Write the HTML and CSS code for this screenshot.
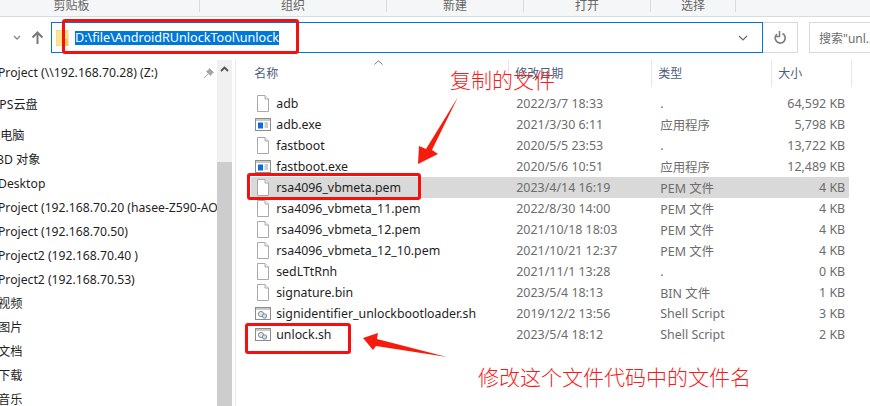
FILE: index.html
```html
<!DOCTYPE html>
<html lang="zh-CN">

<head>
    <meta charset="UTF-8">
    <meta name="viewport" content="width=device-width, initial-scale=1.0">
    <title>unlock</title>
    <link rel="stylesheet" href="styles.css">
</head>

<body>

    <svg class="defs" width="0" height="0">
        <symbol id="icon-file" viewBox="0 0 14 17">
            <path d="M1.5 .5H9L12.5 4V16.5H1.5Z" fill="#fff" stroke="#a9a9a9" />
            <path d="M9 .5V4H12.5" fill="#f2f2f2" stroke="#a9a9a9" />
        </symbol>
        <symbol id="icon-exe" viewBox="0 0 16 13">
            <rect x=".5" y=".5" width="15" height="12" fill="#fff" stroke="#8c8c8c" />
            <rect x="1" y="1" width="14" height="2" fill="#c9c9c9" />
            <rect x="3" y="4.5" width="5" height="6" fill="#0a6fd0" />
            <path d="M9.5 5H13M9.5 7H13M9.5 9H13" stroke="#9a9a9a" />
        </symbol>
        <symbol id="icon-script" viewBox="0 0 16 13">
            <rect x=".5" y=".5" width="15" height="12" fill="#fff" stroke="#8c8c8c" />
            <rect x="1" y="1" width="14" height="2" fill="#c9c9c9" />
            <circle cx="6" cy="7" r="2.6" fill="#dfe9ef" stroke="#7d8d99" />
            <circle cx="9.5" cy="9" r="2.2" fill="#cfe0ea" stroke="#7d8d99" />
        </symbol>
    </svg>

    <div class="window">
        <!-- Ribbon group labels -->
        <div class="ribbon">
            <div class="ribbon-group group-clipboard">剪贴板</div>
            <div class="ribbon-group group-organize">组织</div>
            <div class="ribbon-group group-new">新建</div>
            <div class="ribbon-group group-open">打开</div>
            <div class="ribbon-group group-select">选择</div>
        </div>

        <!-- Address row -->
        <div class="address-row">
            <div class="nav-buttons">
                <svg class="icon-down" width="8" height="5" viewBox="0 0 8 5">
                    <path d="M1 1L4 4L7 1" fill="none" stroke="#8a8a8a" stroke-width="1.4" />
                </svg>
                <svg class="icon-up" width="13" height="13" viewBox="0 0 13 13">
                    <path d="M6.5 13V2M1.5 6.5L6.5 1.5L11.5 6.5" fill="none" stroke="#7a7a7a" stroke-width="2" />
                </svg>
            </div>
            <div class="address-bar">
                <svg class="icon-folder" width="13" height="16" viewBox="0 0 13 16">
                    <rect x="0" y="0" width="12" height="16" fill="#fde58f" />
                    <rect x="0" y="0" width="12" height="16" fill="none" stroke="#f0d27a" />
                    <rect x="9" y="9" width="3" height="7" fill="#f3c95c" />
                </svg>
                <span class="address-text">D:\file\AndroidRUnlockTool\unlock</span>
                <svg class="icon-drop" width="10" height="6" viewBox="0 0 10 6">
                    <path d="M1 1L5 5L9 1" fill="none" stroke="#666" stroke-width="1.1" />
                </svg>
            </div>
            <div class="refresh">
                <svg width="14" height="14" viewBox="0 0 14 14">
                    <path d="M4 3.2A5 5 0 1 0 9.5 2.6" fill="none" stroke="#7d7d7d" stroke-width="1.7" />
                    <path d="M5.500 0V5.500H1" fill="none" stroke="#7d7d7d" stroke-width="1.5" transform="translate(1 0)" />
                </svg>
            </div>
            <div class="search">搜索"unl...</div>
        </div>

        <div class="content">
            <!-- Navigation tree -->
            <div class="nav-pane">
                <div class="nav-item nav-first">Project (\\192.168.70.28) (Z:)
                    <svg class="icon-pin" width="11" height="11" viewBox="0 0 11 11">
                        <path d="M6.500 .5L10.500 4.500L9 5L7.500 7.500L3.500 3.500L6 2ZM5 6L1 10" fill="#a6a6a6" stroke="#a6a6a6" />
                    </svg>
                </div>
                <div class="nav-item nav-root nav-cloud">WPS云盘</div>
                <div class="nav-item nav-root nav-pc">此电脑</div>
                <div class="nav-item nav-objects">3D 对象</div>
                <div class="nav-item">Desktop</div>
                <div class="nav-item">Project (192.168.70.20 (hasee-Z590-AORUS) (X:)</div>
                <div class="nav-item">Project (192.168.70.50)</div>
                <div class="nav-item">Project2 (192.168.70.40 )</div>
                <div class="nav-item">Project2 (192.168.70.53)</div>
                <div class="nav-item">视频</div>
                <div class="nav-item">图片</div>
                <div class="nav-item">文档</div>
                <div class="nav-item">下载</div>
                <div class="nav-item">音乐</div>
            </div>

            <div class="scrollbar">
                <div class="scroll-track">
                    <svg width="9" height="6" viewBox="0 0 9 6">
                        <path d="M1 5L4.500 1.500L8 5" fill="none" stroke="#505050" stroke-width="1.8" />
                    </svg>
                </div>
                <div class="scroll-thumb"></div>
            </div>

            <!-- File list -->
            <div class="file-pane">
                <div class="file-head">
                    <div class="head-cell head-name">名称
                        <svg class="icon-sort" width="9" height="5" viewBox="0 0 9 5">
                            <path d="M.5 4.500L4.500 .8L8.500 4.500" fill="none" stroke="#777" />
                        </svg>
                    </div>
                    <div class="head-cell head-date">修改日期</div>
                    <div class="head-cell head-type">类型</div>
                    <div class="head-cell head-size">大小</div>
                </div>

                <div class="file-list">
                    <div class="row"><svg class="file-icon"><use href="#icon-file" /></svg><span class="name">adb</span><span class="cell">2022/3/7 18:33</span><span class="cell">.</span><span class="cell size">64,592 KB</span></div>
                    <div class="row"><svg class="wide-icon"><use href="#icon-exe" /></svg><span class="name">adb.exe</span><span class="cell">2021/3/30 6:11</span><span class="cell">应用程序</span><span class="cell size">5,798 KB</span></div>
                    <div class="row"><svg class="file-icon"><use href="#icon-file" /></svg><span class="name">fastboot</span><span class="cell">2020/5/5 23:53</span><span class="cell">.</span><span class="cell size">13,722 KB</span></div>
                    <div class="row"><svg class="wide-icon"><use href="#icon-exe" /></svg><span class="name">fastboot.exe</span><span class="cell">2020/5/6 10:51</span><span class="cell">应用程序</span><span class="cell size">12,489 KB</span></div>
                    <div class="row row-selected"><svg class="file-icon"><use href="#icon-file" /></svg><span class="name">rsa4096_vbmeta.pem</span><span class="cell">2023/4/14 16:19</span><span class="cell">PEM 文件</span><span class="cell size">4 KB</span></div>
                    <div class="row"><svg class="file-icon"><use href="#icon-file" /></svg><span class="name">rsa4096_vbmeta_11.pem</span><span class="cell">2022/8/30 14:00</span><span class="cell">PEM 文件</span><span class="cell size">4 KB</span></div>
                    <div class="row"><svg class="file-icon"><use href="#icon-file" /></svg><span class="name">rsa4096_vbmeta_12.pem</span><span class="cell">2021/10/18 18:03</span><span class="cell">PEM 文件</span><span class="cell size">4 KB</span></div>
                    <div class="row"><svg class="file-icon"><use href="#icon-file" /></svg><span class="name">rsa4096_vbmeta_12_10.pem</span><span class="cell">2021/10/21 12:37</span><span class="cell">PEM 文件</span><span class="cell size">4 KB</span></div>
                    <div class="row"><svg class="file-icon"><use href="#icon-file" /></svg><span class="name">sedLTtRnh</span><span class="cell">2021/11/1 13:28</span><span class="cell">.</span><span class="cell size">0 KB</span></div>
                    <div class="row"><svg class="file-icon"><use href="#icon-file" /></svg><span class="name">signature.bin</span><span class="cell">2023/5/4 18:13</span><span class="cell">BIN 文件</span><span class="cell size">1 KB</span></div>
                    <div class="row"><svg class="wide-icon"><use href="#icon-script" /></svg><span class="name">signidentifier_unlockbootloader.sh</span><span class="cell">2019/12/2 13:56</span><span class="cell">Shell Script</span><span class="cell size">3 KB</span></div>
                    <div class="row"><svg class="wide-icon"><use href="#icon-script" /></svg><span class="name">unlock.sh</span><span class="cell">2023/5/4 18:12</span><span class="cell">Shell Script</span><span class="cell size">2 KB</span></div>
                </div>
            </div>
        </div>

        <!-- Screenshot annotations drawn on top -->
        <div class="mark mark-address"></div>
        <div class="mark mark-pem"></div>
        <div class="mark mark-unlock"></div>
        <svg class="arrows" width="870" height="406" viewBox="0 0 870 406">
            <polygon points="458,97 432,150 438,154 418,164 419,146 426,149" fill="#f61c0d" />
            <polygon points="363,338 378,333 377,339 447,357 376,346 373,350" fill="#f61c0d" />
        </svg>
        <div class="note note-copy">复制的文件</div>
        <div class="note note-edit">修改这个文件代码中的文件名</div>
    </div>

</body>

</html>
```

FILE: styles.css
```css
* {
    box-sizing: border-box;
}

body {
    margin: 0;
    background-color: #fff;
    font-family: "Noto Sans", "Noto Sans CJK SC", sans-serif;
    font-size: 12px;
    color: #1f1f1f;
}

.defs {
    position: absolute;
}

.window {
    position: relative;
    width: 870px;
    height: 406px;
    overflow: hidden;
}

/* Ribbon */
.ribbon {
    display: flex;
    height: 17px;
    padding-bottom: 5px;
    background-color: #f5f6f7;
    border-bottom: 1px solid #dadbdc;
}

.ribbon-group {
    display: flex;
    justify-content: center;
    align-items: center;
    height: 12px;
    color: #666;
    line-height: 10px;
    border-right: 1px solid #dadbdc;
}

.group-clipboard { width: 200px; padding-right: 56px; }
.group-organize { width: 187px; }
.group-new { width: 137px; }
.group-open { width: 127px; }
.group-select { width: 85px; }

/* Address row */
.address-row {
    display: flex;
    height: 43px;
    padding-top: 5px;
    align-items: flex-start;
}

.nav-buttons {
    display: flex;
    flex-shrink: 0;
    align-items: center;
    width: 51px;
    height: 30px;
    padding-left: 13px;
}

.icon-up {
    margin-left: 10px;
}

.address-bar {
    display: flex;
    flex-shrink: 0;
    align-items: center;
    width: 712px;
    height: 31px;
    padding: 0 14px 0 4px;
    border: 1px solid #0078d7;
}

.address-text {
    margin-left: 6px;
    padding: 0 0 1px;
    background-color: #0078d7;
    color: #fff;
    font-size: 12.600px;
    line-height: 13px;
}

.icon-drop {
    margin-left: auto;
}

.refresh {
    display: flex;
    flex-shrink: 0;
    justify-content: center;
    align-items: center;
    width: 35px;
    height: 31px;
    border: 1px solid #d9d9d9;
    border-left: none;
}

.search {
    flex-shrink: 0;
    width: 70px;
    height: 31px;
    margin-left: 11px;
    padding: 6px 0 0 9px;
    border: 1px solid #d9d9d9;
    color: #6d6d6d;
    white-space: nowrap;
}

/* Nav pane */
.content {
    display: flex;
    height: 346px;
}

.nav-pane {
    width: 218px;
    padding-top: 1px;
    overflow: hidden;
    white-space: nowrap;
}

.nav-item {
    position: relative;
    height: 24px;
    margin-left: -2px;
    color: #1f1f1f;
    font-size: 12.200px;
    line-height: 24px;
}

.nav-root {
    margin-left: -12px;
}

.nav-cloud {
    margin-top: 8px;
}

.nav-pc {
    margin-top: 7px;
}

.nav-objects {
    margin-left: -3px;
}

.icon-pin {
    position: absolute;
    top: 7px;
    left: 205px;
}

.scrollbar {
    display: flex;
    flex-direction: column;
    width: 15px;
}

.scroll-track {
    display: flex;
    justify-content: center;
    height: 102px;
    padding-top: 6px;
    background-color: #f0f0f0;
}

.scroll-thumb {
    flex: 1;
    background-color: #cdcdcd;
}

/* File list */
.file-pane {
    width: 637px;
    border-left: 1px solid #ececec;
    margin-left: 3px;
}

.file-head {
    display: flex;
    height: 27px;
    color: #4c607a;
}

.head-cell {
    position: relative;
    height: 27px;
    padding-left: 6px;
    line-height: 28px;
    border-right: 1px solid #e5e5e5;
    font-size: 12px;
}

.head-name { width: 273px; padding-left: 18px; }
.head-date { width: 143px; }
.head-type { width: 120px; }
.head-size { width: 80px; }

.icon-sort {
    position: absolute;
    top: 0;
    left: 138px;
}

.file-list {
    padding: 6px 0 0 15px;
}

.row {
    display: grid;
    grid-template-columns: 25px 240px 144px 120px 65px;
    align-items: center;
    width: 598px;
    height: 21px;
    white-space: nowrap;
}

.row-selected {
    background-color: #d9d9d9;
}

.file-icon {
    width: 14px;
    height: 17px;
    margin-left: 5px;
}

.wide-icon {
    width: 16px;
    height: 13px;
    margin-left: 4px;
}

.name {
    color: #1f1f1f;
    font-size: 12.350px;
}

.cell {
    color: #6d6d6d;
    font-size: 12.450px;
}

.size {
    text-align: right;
}

/* Annotations */
.mark {
    position: absolute;
    border: 3px solid #f60f0f;
    border-radius: 3px;
}

.mark-address {
    top: 19px;
    left: 62px;
    width: 237px;
    height: 35px;
}

.mark-pem {
    top: 173px;
    left: 247px;
    width: 174px;
    height: 27px;
}

.mark-unlock {
    top: 323px;
    left: 245px;
    width: 106px;
    height: 31px;
}

.arrows {
    position: absolute;
    top: 0;
    left: 0;
}

.note {
    position: absolute;
    color: #f61c1c;
    font-family: "Noto Sans CJK SC", sans-serif;
    font-size: 21px;
    font-weight: 300;
    line-height: 24px;
    white-space: nowrap;
}

.note-copy {
    top: 67px;
    left: 450px;
}

.note-edit {
    top: 364px;
    left: 478px;
}
```
